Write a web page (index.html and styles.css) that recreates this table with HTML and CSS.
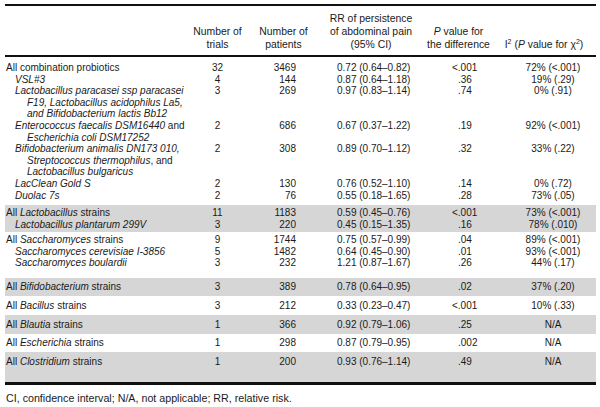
FILE: index.html
```
<!DOCTYPE html>
<html>
<head>
<meta charset="utf-8">
<link rel="stylesheet" href="styles.css">
</head>
<body>
<table class="tbl">
  <colgroup>
    <col class="c1"><col class="c2"><col class="c3"><col class="c4"><col class="c5"><col class="c6">
  </colgroup>
  <thead>
    <tr>
      <th class="lab"></th>
      <th>Number of<br>trials</th>
      <th>Number of<br>patients</th>
      <th>RR of persistence<br>of abdominal pain<br>(95% CI)</th>
      <th><i>P</i> value for<br>the difference</th>
      <th>I<sup>2</sup> (<i>P</i> value for χ<sup>2</sup>)</th>
    </tr>
  </thead>
  <tbody class="grp g-combo">
    <tr><td class="lab">All combination probiotics</td><td class="n">32</td><td class="p">3469</td><td class="rr">0.72 (0.64–0.82)</td><td class="pv"><span class="lt">&lt;</span>.001</td><td class="i2">72% (&lt;.001)</td></tr>
    <tr><td class="lab sub"><i>VSL#3</i></td><td class="n">4</td><td class="p">144</td><td class="rr">0.87 (0.64–1.18)</td><td class="pv">.36</td><td class="i2">19% (.29)</td></tr>
    <tr><td class="lab sub"><i>Lactobacillus paracasei ssp paracasei<br>F19, Lactobacillus acidophilus La5,<br>and Bifidobacterium lactis Bb12</i></td><td class="n">3</td><td class="p">269</td><td class="rr">0.97 (0.83–1.14)</td><td class="pv">.74</td><td class="i2">0% (.91)</td></tr>
    <tr><td class="lab sub"><i>Enterococcus faecalis DSM16440</i> and<br><i>Escherichia coli DSM17252</i></td><td class="n">2</td><td class="p">686</td><td class="rr">0.67 (0.37–1.22)</td><td class="pv">.19</td><td class="i2">92% (&lt;.001)</td></tr>
    <tr><td class="lab sub"><i>Bifidobacterium animalis DN173 010,<br>Streptococcus thermophilus</i>, and<br><i>Lactobacillus bulgaricus</i></td><td class="n">2</td><td class="p">308</td><td class="rr">0.89 (0.70–1.12)</td><td class="pv">.32</td><td class="i2">33% (.22)</td></tr>
    <tr><td class="lab sub"><i>LacClean Gold S</i></td><td class="n">2</td><td class="p">130</td><td class="rr">0.76 (0.52–1.10)</td><td class="pv">.14</td><td class="i2">0% (.72)</td></tr>
    <tr><td class="lab sub"><i>Duolac 7s</i></td><td class="n">2</td><td class="p">76</td><td class="rr">0.55 (0.18–1.65)</td><td class="pv">.28</td><td class="i2">73% (.05)</td></tr>
  </tbody>
  <tbody class="grp shade g-lacto">
    <tr><td class="lab">All <i>Lactobacillus</i> strains</td><td class="n">11</td><td class="p">1183</td><td class="rr">0.59 (0.45–0.76)</td><td class="pv"><span class="lt">&lt;</span>.001</td><td class="i2">73% (&lt;.001)</td></tr>
    <tr><td class="lab sub"><i>Lactobacillus plantarum 299V</i></td><td class="n">3</td><td class="p">220</td><td class="rr">0.45 (0.15–1.35)</td><td class="pv">.16</td><td class="i2">78% (.010)</td></tr>
  </tbody>
  <tbody class="grp g-sacch">
    <tr><td class="lab">All <i>Saccharomyces</i> strains</td><td class="n">9</td><td class="p">1744</td><td class="rr">0.75 (0.57–0.99)</td><td class="pv">.04</td><td class="i2">89% (&lt;.001)</td></tr>
    <tr><td class="lab sub"><i>Saccharomyces cerevisiae I-3856</i></td><td class="n">5</td><td class="p">1482</td><td class="rr">0.64 (0.45–0.90)</td><td class="pv">.01</td><td class="i2">93% (&lt;.001)</td></tr>
    <tr><td class="lab sub"><i>Saccharomyces boulardii</i></td><td class="n">3</td><td class="p">232</td><td class="rr">1.21 (0.87–1.67)</td><td class="pv">.26</td><td class="i2">44% (.17)</td></tr>
  </tbody>
  <tbody class="grp shade single">
    <tr><td class="lab">All <i>Bifidobacterium</i> strains</td><td class="n">3</td><td class="p">389</td><td class="rr">0.78 (0.64–0.95)</td><td class="pv">.02</td><td class="i2">37% (.20)</td></tr>
  </tbody>
  <tbody class="grp single">
    <tr><td class="lab">All <i>Bacillus</i> strains</td><td class="n">3</td><td class="p">212</td><td class="rr">0.33 (0.23–0.47)</td><td class="pv"><span class="lt">&lt;</span>.001</td><td class="i2">10% (.33)</td></tr>
  </tbody>
  <tbody class="grp shade single">
    <tr><td class="lab">All <i>Blautia</i> strains</td><td class="n">1</td><td class="p">366</td><td class="rr">0.92 (0.79–1.06)</td><td class="pv">.25</td><td class="i2">N/A</td></tr>
  </tbody>
  <tbody class="grp single">
    <tr><td class="lab">All <i>Escherichia</i> strains</td><td class="n">1</td><td class="p">298</td><td class="rr">0.87 (0.79–0.95)</td><td class="pv">.002</td><td class="i2">N/A</td></tr>
  </tbody>
  <tbody class="grp shade g-last">
    <tr><td class="lab">All <i>Clostridium</i> strains</td><td class="n">1</td><td class="p">200</td><td class="rr">0.93 (0.76–1.14)</td><td class="pv">.49</td><td class="i2">N/A</td></tr>
  </tbody>
</table>
<p class="note">CI, confidence interval; N/A, not applicable; RR, relative risk.</p>
</body>
</html>
```
FILE: styles.css
```
html, body {
  margin: 0;
  padding: 0;
  background: #ffffff;
}
body {
  font-family: "Liberation Sans", Arial, sans-serif;
  color: #1a1a1a;
  font-size: 10px;
}
.tbl {
  margin: 4px 0 0 5px;
  width: 591px;
  border-collapse: separate;
  border-spacing: 0;
  table-layout: fixed;
  border-top: 2px solid #111;
  border-bottom: 3px solid #111;
}
.c1 { width: 180px; }
.c2 { width: 65px; }
.c3 { width: 67px; }
.c4 { width: 108px; }
.c5 { width: 67px; }
.c6 { width: 104px; }
th {
  font-weight: normal;
  font-size: 10.4px;
  text-align: center;
  vertical-align: bottom;
  line-height: 13px;
  height: 39px;
  padding: 5.5px 0 4.5px 0;
  border-bottom: 2px solid #111;
}
th sup, td sup { font-size: 7px; line-height: 0; }
td {
  padding: 0;
  line-height: 11.6px;
  vertical-align: top;
  white-space: nowrap;
}
.g-combo tr:first-child td { padding-top: 5px; }
.g-combo tr:last-child td { padding-bottom: 3.8px; }
.g-lacto tr:first-child td { padding-top: 2.5px; }
.g-lacto tr:last-child td { padding-bottom: 1.5px; }
.g-sacch tr:first-child td { padding-top: 2px; }
.g-sacch tr:last-child td { padding-bottom: 9px; }
.single td { padding-top: 3.5px; padding-bottom: 3.5px; }
.g-last td { padding-top: 3.5px; padding-bottom: 14.5px; }
.shade { background: #d6d6d6; }
td.lab { padding-left: 1px; }
td.sub { padding-left: 22px; text-indent: -12px; }
td.n { text-align: center; }
td.p { text-align: right; padding-right: 21px; }
td.rr { text-align: left; padding-left: 20px; }
td.pv { text-align: left; padding-left: 33px; }
.lt { margin-left: -6px; }
td.i2 { text-align: center; padding-left: 18px; }
.note {
  margin: 7px 0 0 6px;
  font-size: 10.7px;
  line-height: 12px;
}
```
